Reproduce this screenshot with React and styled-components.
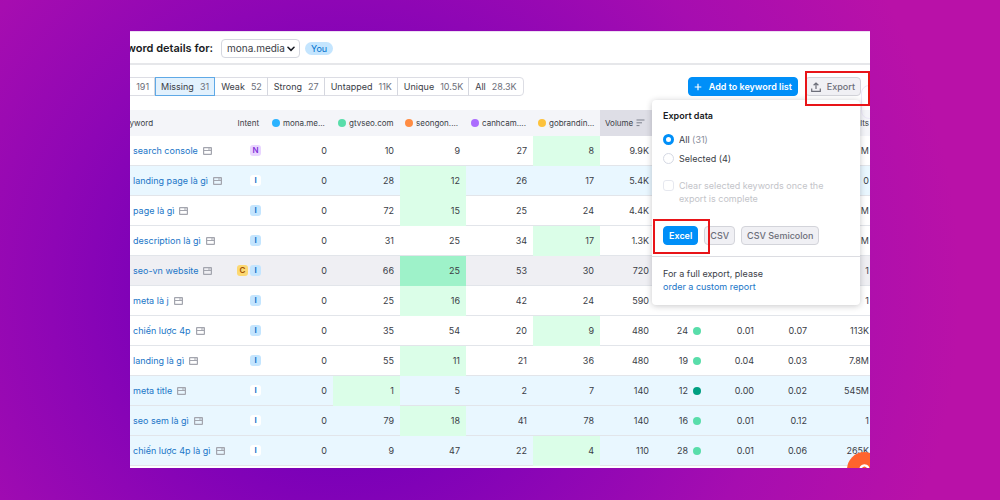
import { useState } from 'react';
import styled, { createGlobalStyle } from 'styled-components';

const GlobalStyle = createGlobalStyle`
  *, *::before, *::after {
    box-sizing: border-box;
  }
  body {
    margin: 0;
    font-family: Inter, 'Liberation Sans', sans-serif;
    font-size: 9px;
    line-height: 13px;
    color: #3a3d46;
  }
  button, select, input {
    font: inherit;
    color: inherit;
    margin: 0;
  }
`;

const Page = styled.div`
  min-height: 100vh;
  padding: 31px 13% 32px;
  background: radial-gradient(
    circle at 34% 58%,
    #7a00b8 170px,
    #8e06b5 290px,
    #a60db0 440px,
    #b911a8 620px
  );
`;

const Panel = styled.main`
  position: relative;
  overflow: hidden;
  padding-bottom: 2px;
  background: #fff;
  border-top: 1px solid #ecdff2;
`;

/* the report is scrolled sideways, so its left edge sits outside the panel */
const Scrolled = styled.div`
  margin-left: -60px;
`;

const Header = styled.header`
  display: flex;
  align-items: center;
  gap: 8px;
  height: 33px;
  padding: 2px 0 0 16px;
  border-bottom: 2px solid #e6e7ea;
`;

const Title = styled.label`
  width: 127px;
  font-size: 11px;
  font-weight: 600;
  text-align: right;
  white-space: nowrap;
  color: #191b23;
`;

const SelectBox = styled.div`
  display: grid;
  align-items: center;
  width: 79px;
  height: 19px;

  > * {
    grid-area: 1 / 1;
  }
  svg {
    justify-self: end;
    margin-right: 5px;
    pointer-events: none;
  }
`;

const Select = styled.select`
  appearance: none;
  width: 100%;
  height: 100%;
  padding: 0 5px;
  border: 1px solid #d5d7df;
  border-radius: 4px;
  background: #fff;
  font-size: 10px;
`;

const You = styled.span`
  padding: 0 6px;
  border-radius: 7px;
  background: #c4e5fe;
  color: #0071cd;
  margin-left: -3px;
`;

const Toolbar = styled.div`
  display: flex;
  align-items: center;
  justify-content: space-between;
  height: 45px;
  padding: 0 9px 2px 23px;
`;

const Tabs = styled.div`
  display: flex;
  height: 19px;
  border: 1px solid #dcdde4;
  border-radius: 4px;
`;

const Tab = styled.button`
  display: flex;
  align-items: center;
  gap: 6px;
  margin: -1px 0;
  padding: 0 5px;
  border: 1px solid ${(p) => (p.$active ? '#5fa9e6' : 'transparent')};
  border-right-color: ${(p) => (p.$active ? '#5fa9e6' : '#d5d7df')};
  background: ${(p) => (p.$active ? '#e2f1fd' : 'none')};
  white-space: nowrap;

  &:last-child {
    border-right-color: transparent;
  }
  span {
    color: #6c6e79;
  }
`;

const Actions = styled.div`
  position: relative;
  display: flex;
  gap: 7px;
`;

const Button = styled.button`
  display: flex;
  align-items: center;
  gap: ${(p) => (p.$primary ? 7 : 6)}px;
  height: 19px;
  padding: 0 5px;
  border: 1px solid ${(p) => (p.$primary ? '#008ff8' : '#d3d4da')};
  border-radius: 4px;
  background: ${(p) => (p.$primary ? '#008ff8' : '#f0f0f4')};
  color: ${(p) => (p.$primary ? '#fff' : '#6c6e79')};
  font-weight: ${(p) => (p.$primary ? 600 : 500)};
  white-space: nowrap;
`;

const Popover = styled.section`
  position: absolute;
  z-index: 1;
  top: 23px;
  right: 1px;
  width: 208px;
  border-radius: 4px;
  background: #fff;
  box-shadow: 0 1px 6px rgba(25, 27, 35, 0.24);
`;

const PopoverBody = styled.div`
  padding: 9px 11px 11px;
  border-bottom: 1px solid #dcdde2;
`;

const PopoverTitle = styled.h2`
  margin: 0 0 11px;
  font-size: 9px;
  line-height: 13px;
  font-weight: 600;
  color: #191b23;
`;

const Option = styled.label`
  display: flex;
  gap: 5px;
  margin-bottom: 6px;
  color: ${(p) => (p.$disabled ? '#c3c4c9' : 'inherit')};

  span {
    color: #8a8e9b;
  }
`;

const ClearOption = styled(Option)`
  margin-top: 14px;
`;

const Mark = styled.input`
  appearance: none;
  flex: none;
  width: 11px;
  height: 11px;
  margin-top: 1px;
  border: 1px solid #d5d9e4;
  border-radius: ${(p) => (p.type === 'radio' ? '50%' : '3px')};
  opacity: ${(p) => (p.disabled ? 0.6 : 1)};

  &:checked {
    border: 3px solid #008ff8;
  }
`;

const Formats = styled.div`
  display: flex;
  gap: 6px;
  margin-top: 21px;
`;

const PopoverFooter = styled.p`
  margin: 0;
  padding: 10px 11px 12px;
`;

const Link = styled.a`
  color: #2176c7;
  text-decoration: none;
`;

const Highlight = styled.div`
  position: absolute;
  z-index: 2;
  top: ${(p) => p.$top}px;
  right: ${(p) => p.$right}px;
  width: ${(p) => p.$width}px;
  height: 35px;
  border: 2px solid #e81418;
  pointer-events: none;
`;

const Table = styled.table`
  width: 100%;
  table-layout: fixed;
  border-collapse: separate;
  border-spacing: 0;
`;

const Th = styled.th`
  height: 26px;
  padding: 0 6px 0 0;
  background: ${(p) => (p.$sorted ? '#dedee6' : '#f4f5f9')};
  font-size: 8px;
  font-weight: 400;
  text-align: right;
  white-space: nowrap;
`;

const KeywordTh = styled(Th)`
  padding-left: 50px;
  text-align: left;
`;

const IntentTh = styled(Th)`
  padding-right: 8px;
`;

const LastTh = styled(Th)`
  padding-right: 1px;
`;

const HeadLabel = styled.div`
  display: flex;
  align-items: center;
  gap: 3px;
  padding-left: 5px;
`;

const Dot = styled.i`
  flex: none;
  width: 8px;
  height: 8px;
  border-radius: 50%;
  background: ${(p) => p.$color};
`;

const rowTone = {
  selected: '#e9f7ff',
  hover: '#efeff3',
};

const Row = styled.tr`
  background: ${(p) => rowTone[p.$tone] || '#fff'};
`;

const Td = styled.td`
  height: 30px;
  padding: 0 6px 0 0;
  border-bottom: 1px solid ${(p) => (p.$best ? 'transparent' : '#e2e5ea')};
  background: ${(p) => p.$best || 'none'};
  text-align: right;
  white-space: nowrap;
`;

const KeywordCell = styled(Td)`
  padding-left: 63px;
  text-align: left;
`;

const LastTd = styled(Td)`
  padding-right: 1px;
`;

const Inline = styled.div`
  display: flex;
  align-items: center;
  justify-content: ${(p) => p.$justify || 'flex-start'};
  gap: ${(p) => p.$gap}px;
`;

const intentTone = {
  I: ['#c4e5fe', '#0068c4'],
  N: ['#e9d5ff', '#8232d8'],
  C: ['#fcd872', '#a04e00'],
};

const Intent = styled.span`
  width: 11px;
  height: 11px;
  border-radius: 3px;
  background: ${(p) => (p.$plain ? '#fff' : intentTone[p.$type][0])};
  color: ${(p) => intentTone[p.$type][1]};
  font-size: 8px;
  line-height: 11px;
  font-weight: 600;
  text-align: center;
`;

const SideTip = styled.div`
  position: absolute;
  top: 53px;
  right: -10px;
  width: 19px;
  height: 34px;
  border: 1px solid #ece8f8;
  border-radius: 8px;
`;

const HelpButton = styled.button`
  position: absolute;
  right: -12px;
  bottom: -19px;
  width: 35px;
  height: 35px;
  padding: 0;
  border: 0;
  border-radius: 50%;
  background: #ff642d;
  color: #fff;
`;

const SerpIcon = () => (
  <svg width='9' height='8' viewBox='0 0 9 8' fill='none' stroke='#a3a5ae'>
    <rect x='0.6' y='0.6' width='7.8' height='6.8' rx='0.4' strokeWidth='1.2' />
    <path d='M1 3.5h7M5 2h2.5' strokeWidth='1.2' />
  </svg>
);

const SortIcon = () => (
  <svg width='9' height='8' viewBox='0 0 9 8' fill='none' stroke='#7d808c'>
    <path d='M0.5 1h8M0.5 3.8h5.5M0.5 6.6h3' />
  </svg>
);

const ChevronIcon = () => (
  <svg width='8' height='6' viewBox='0 0 8 6' fill='none' stroke='#191b23'>
    <path d='M1 1.3 4 4.3 7 1.3' strokeWidth='1.6' strokeLinecap='round' />
  </svg>
);

const PlusIcon = () => (
  <svg width='8' height='8' viewBox='0 0 8 8' fill='none' stroke='#fff'>
    <path d='M4 0.7v6.6M0.7 4h6.6' strokeWidth='1.2' />
  </svg>
);

const UploadIcon = () => (
  <svg width='10' height='10' viewBox='0 0 10 10' fill='none' stroke='#6c6e79'>
    <path
      d='M5 7V1.2M2.6 3.3 5 1l2.4 2.3M0.7 6.5v2.8h8.6V6.5'
      strokeWidth='1.2'
    />
  </svg>
);

const tabs = [
  ['Shared', '191'],
  ['Missing', '31'],
  ['Weak', '52'],
  ['Strong', '27'],
  ['Untapped', '11K'],
  ['Unique', '10.5K'],
  ['All', '28.3K'],
];

const domains = [
  { name: 'mona.me...', color: '#2bb3ff', width: 66 },
  { name: 'gtvseo.com', color: '#59ddaa', width: 67 },
  { name: 'seongon....', color: '#ff8c43', width: 66 },
  { name: 'canhcam....', color: '#ab6cfe', width: 67 },
  { name: 'gobrandin...', color: '#fdc23c', width: 67 },
];

const LIGHT = '#59ddaa';
const DARK = '#009f81';

// best: index of the domain with the best position
const rows = [
  { keyword: 'search console', intent: 'N', ranks: [0, 10, 9, 27, 8], best: 4, volume: '9.9K', results: 'M' },
  { keyword: 'landing page là gì', intent: 'I', ranks: [0, 28, 12, 26, 17], best: 2, volume: '5.4K', results: '0', tone: 'selected' },
  { keyword: 'page là gì', intent: 'I', ranks: [0, 72, 15, 25, 24], best: 2, volume: '4.4K', results: 'M' },
  { keyword: 'description là gì', intent: 'I', ranks: [0, 31, 25, 34, 17], best: 4, volume: '1.3K', results: 'M' },
  { keyword: 'seo-vn website', intent: 'CI', ranks: [0, 66, 25, 53, 30], best: 2, volume: '720', results: '1', tone: 'hover' },
  { keyword: 'meta là j', intent: 'I', ranks: [0, 25, 16, 42, 24], best: 2, volume: '590', results: '1' },
  { keyword: 'chiến lược 4p', intent: 'I', ranks: [0, 35, 54, 20, 9], best: 4, volume: '480', kd: 24, color: LIGHT, cpc: '0.01', com: '0.07', results: '113K' },
  { keyword: 'landing là gì', intent: 'I', ranks: [0, 55, 11, 21, 36], best: 2, volume: '480', kd: 19, color: LIGHT, cpc: '0.04', com: '0.03', results: '7.8M' },
  { keyword: 'meta title', intent: 'I', ranks: [0, 1, 5, 2, 7], best: 1, volume: '140', kd: 12, color: DARK, cpc: '0.00', com: '0.02', results: '545M', tone: 'selected' },
  { keyword: 'seo sem là gì', intent: 'I', ranks: [0, 79, 18, 41, 78], best: 2, volume: '140', kd: 16, color: LIGHT, cpc: '0.01', com: '0.12', results: '1', tone: 'selected' },
  { keyword: 'chiến lược 4p là gì', intent: 'I', ranks: [0, 9, 47, 22, 4], best: 4, volume: '110', kd: 28, color: LIGHT, cpc: '0.01', com: '0.06', results: '265K', tone: 'selected' },
];

const bestColor = (row, i) => {
  if (row.best !== i) return undefined;
  return row.tone === 'hover' ? '#9ef2c9' : '#dbfee8';
};

function ExportPopover() {
  const [scope, setScope] = useState('all');
  return (
    <Popover aria-label='Export data'>
      <PopoverBody>
        <PopoverTitle>Export data</PopoverTitle>
        <Option>
          <Mark
            type='radio'
            name='scope'
            checked={scope === 'all'}
            onChange={() => setScope('all')}
          />
          <div>
            All <span>(31)</span>
          </div>
        </Option>
        <Option>
          <Mark
            type='radio'
            name='scope'
            checked={scope === 'selected'}
            onChange={() => setScope('selected')}
          />
          <div>Selected (4)</div>
        </Option>
        <ClearOption $disabled>
          <Mark type='checkbox' disabled />
          <div>
            Clear selected keywords once the
            <br />
            export is complete
          </div>
        </ClearOption>
        <Formats>
          <Button type='button' $primary>
            Excel
          </Button>
          <Button type='button'>CSV</Button>
          <Button type='button'>CSV Semicolon</Button>
        </Formats>
      </PopoverBody>
      <PopoverFooter>
        For a full export, please
        <br />
        <Link href='#custom-report'>order a custom report</Link>
      </PopoverFooter>
    </Popover>
  );
}

function KeywordTable() {
  return (
    <Table>
      <colgroup>
        <col width='162' />
        <col width='35' />
        {domains.map(({ name, width }) => (
          <col key={name} width={width} />
        ))}
        <col width='55' />
        <col width='52' />
        <col width='53' />
        <col width='53' />
        <col />
      </colgroup>
      <thead>
        <tr>
          <KeywordTh>Keyword</KeywordTh>
          <IntentTh>Intent</IntentTh>
          {domains.map(({ name, color }) => (
            <Th key={name}>
              <HeadLabel>
                <Dot $color={color} />
                {name}
              </HeadLabel>
            </Th>
          ))}
          <Th $sorted>
            <HeadLabel>
              Volume
              <SortIcon />
            </HeadLabel>
          </Th>
          <Th />
          <Th />
          <Th />
          <LastTh>Results</LastTh>
        </tr>
      </thead>
      <tbody>
        {rows.map((row) => (
          <Row key={row.keyword} $tone={row.tone}>
            <KeywordCell>
              <Inline $gap={5}>
                <Link href='#keyword'>{row.keyword}</Link>
                <SerpIcon />
              </Inline>
            </KeywordCell>
            <Td>
              <Inline $gap={2} $justify='flex-end'>
                {row.intent.split('').map((type) => (
                  <Intent
                    key={type}
                    $type={type}
                    $plain={row.tone === 'selected'}
                  >
                    {type}
                  </Intent>
                ))}
              </Inline>
            </Td>
            {row.ranks.map((rank, i) => (
              <Td key={domains[i].name} $best={bestColor(row, i)}>
                {rank}
              </Td>
            ))}
            <Td>{row.volume}</Td>
            <Td>
              {row.kd && (
                <Inline $gap={5} $justify='flex-end'>
                  {row.kd}
                  <Dot $color={row.color} />
                </Inline>
              )}
            </Td>
            <Td>{row.cpc}</Td>
            <Td>{row.com}</Td>
            <LastTd>{row.results}</LastTd>
          </Row>
        ))}
      </tbody>
    </Table>
  );
}

export default function App() {
  const [active, setActive] = useState('Missing');
  return (
    <Page>
      <GlobalStyle />
      <Panel>
        <Scrolled>
          <Header>
            <Title htmlFor='domain'>Keyword details for:</Title>
            <SelectBox>
              <Select id='domain'>
                <option>mona.media</option>
              </Select>
              <ChevronIcon />
            </SelectBox>
            <You>You</You>
          </Header>
          <Toolbar>
            <Tabs>
              {tabs.map(([name, count]) => (
                <Tab
                  key={name}
                  type='button'
                  $active={name === active}
                  aria-pressed={name === active}
                  onClick={() => setActive(name)}
                >
                  {name} <span>{count}</span>
                </Tab>
              ))}
            </Tabs>
            <Actions>
              <Button type='button' $primary>
                <PlusIcon />
                Add to keyword list
              </Button>
              <Button type='button'>
                <UploadIcon />
                Export
              </Button>
              <ExportPopover />
              <Highlight $top={-6} $right={-9} $width={65} />
              <Highlight $top={142} $right={151} $width={57} />
            </Actions>
          </Toolbar>
          <KeywordTable />
        </Scrolled>
        <SideTip />
        <HelpButton type='button' aria-label='Help'>
          <svg
            width='35'
            height='35'
            viewBox='0 0 35 35'
            fill='none'
            stroke='#fff'
          >
            <path
              d='M13.5 17.5a4 4 0 1 1 6.3 3.2c-1.500 1-2 1.500-2 3.300'
              strokeWidth='2.4'
            />
          </svg>
        </HelpButton>
      </Panel>
    </Page>
  );
}
